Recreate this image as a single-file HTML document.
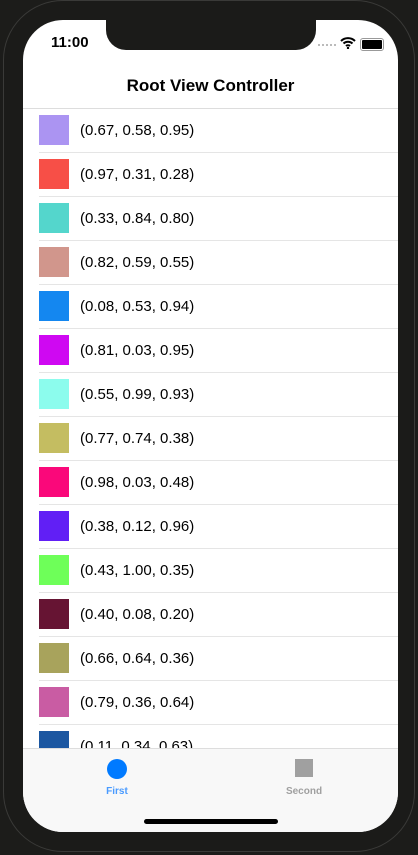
<!DOCTYPE html>
<html><head><style>
body{margin:0;width:418px;height:855px;background:#1c1c1a;position:relative;overflow:hidden;font-family:"Liberation Sans",sans-serif}
.outer{position:absolute;left:3px;top:0;width:412px;height:852px;border-radius:60px;border:1px solid #3a3a38;box-sizing:border-box;background:#1b1b19}
.screen{position:absolute;left:23px;top:20px;width:375px;height:812px;border-radius:40px;background:#fff;overflow:hidden}
.notch{position:absolute;left:83px;top:0;width:210px;height:30px;background:#1b1b19;border-radius:0 0 20px 20px}
.time{position:absolute;left:28px;top:14px;font-size:15px;font-weight:bold;color:#000}
.title{position:absolute;top:56px;width:100%;text-align:center;font-size:17px;font-weight:bold;color:#000}
.navline{position:absolute;top:88px;left:0;width:100%;height:1px;background:#ddd}
.row{position:absolute;left:0;width:375px;height:44px}
.sw{position:absolute;left:16px;top:6px;width:30px;height:30px}
.tx{position:absolute;left:57px;top:13px;font-size:15px;color:#000}
.sep{position:absolute;left:16px;right:0;bottom:0;height:1px;background:#e5e5e5}
.tab{position:absolute;left:0;top:728px;width:375px;height:84px;background:#f8f8f8;border-top:1px solid #ddd}
</style></head><body>
<div class="outer"></div>
<div class="screen">
<div class="notch"></div>
<div class="time">11:00</div>
<div style="position:absolute;left:295px;top:24px;width:18px;height:2px;border-top:2px dotted #bbb"></div>
<svg style="position:absolute;left:317px;top:17px" width="16" height="12" viewBox="0 0 16 12"><path d="M1 4a10 10 0 0 1 14 0M3.5 6.5a6.5 6.5 0 0 1 9 0M6 9a3 3 0 0 1 4 0" stroke="#000" stroke-width="2" fill="none"/><circle cx="8" cy="11" r="1.2"/></svg>
<div style="position:absolute;left:337px;top:18px;width:20px;height:9px;border:1px solid #999;border-radius:3px;padding:1px;box-sizing:content-box"><div style="width:100%;height:100%;background:#000;border-radius:1px"></div></div>
<div class="title">Root View Controller</div>
<div class="navline"></div>
<div class="row" style="top:89px"><div class="sw" style="background:#ab94f2"></div><div class="tx">(0.67, 0.58, 0.95)</div><div class="sep"></div></div>
<div class="row" style="top:133px"><div class="sw" style="background:#f74f47"></div><div class="tx">(0.97, 0.31, 0.28)</div><div class="sep"></div></div>
<div class="row" style="top:177px"><div class="sw" style="background:#54d6cc"></div><div class="tx">(0.33, 0.84, 0.80)</div><div class="sep"></div></div>
<div class="row" style="top:221px"><div class="sw" style="background:#d1968c"></div><div class="tx">(0.82, 0.59, 0.55)</div><div class="sep"></div></div>
<div class="row" style="top:265px"><div class="sw" style="background:#1487f0"></div><div class="tx">(0.08, 0.53, 0.94)</div><div class="sep"></div></div>
<div class="row" style="top:309px"><div class="sw" style="background:#cf08f2"></div><div class="tx">(0.81, 0.03, 0.95)</div><div class="sep"></div></div>
<div class="row" style="top:353px"><div class="sw" style="background:#8cfced"></div><div class="tx">(0.55, 0.99, 0.93)</div><div class="sep"></div></div>
<div class="row" style="top:397px"><div class="sw" style="background:#c4bd61"></div><div class="tx">(0.77, 0.74, 0.38)</div><div class="sep"></div></div>
<div class="row" style="top:441px"><div class="sw" style="background:#fa087a"></div><div class="tx">(0.98, 0.03, 0.48)</div><div class="sep"></div></div>
<div class="row" style="top:485px"><div class="sw" style="background:#611ff5"></div><div class="tx">(0.38, 0.12, 0.96)</div><div class="sep"></div></div>
<div class="row" style="top:529px"><div class="sw" style="background:#6eff59"></div><div class="tx">(0.43, 1.00, 0.35)</div><div class="sep"></div></div>
<div class="row" style="top:573px"><div class="sw" style="background:#661433"></div><div class="tx">(0.40, 0.08, 0.20)</div><div class="sep"></div></div>
<div class="row" style="top:617px"><div class="sw" style="background:#a8a35c"></div><div class="tx">(0.66, 0.64, 0.36)</div><div class="sep"></div></div>
<div class="row" style="top:661px"><div class="sw" style="background:#c95ca3"></div><div class="tx">(0.79, 0.36, 0.64)</div><div class="sep"></div></div>
<div class="row" style="top:705px"><div class="sw" style="background:#1c57a1"></div><div class="tx">(0.11, 0.34, 0.63)</div></div>
<div class="tab">
<div style="position:absolute;left:84px;top:10px;width:20px;height:20px;border-radius:50%;background:#007aff"></div>
<div style="position:absolute;left:76px;top:37px;width:36px;text-align:center;font-size:10px;font-weight:bold;color:#4a9bff">First</div>
<div style="position:absolute;left:272px;top:10px;width:18px;height:18px;background:#a0a0a0"></div>
<div style="position:absolute;left:256px;top:37px;width:50px;text-align:center;font-size:10px;font-weight:bold;color:#a0a0a0">Second</div>
<div style="position:absolute;left:121px;top:70px;width:134px;height:5px;border-radius:3px;background:#000"></div>
</div>
</div>
</body></html>
